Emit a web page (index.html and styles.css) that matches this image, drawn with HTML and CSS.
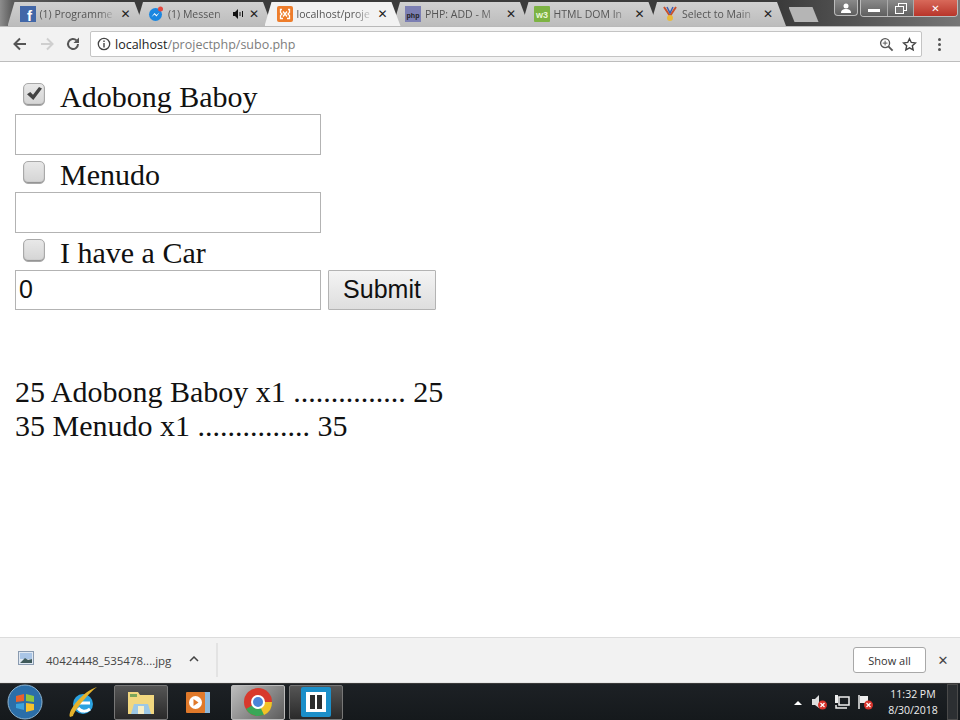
FILE: index.html
```html
<!DOCTYPE html>
<html lang="en">
<head>
<meta charset="utf-8">
<title>subo.php</title>
<link rel="stylesheet" href="styles.css">
</head>
<body>
<div class="screen">
  <header class="tabstrip">
    <div class="tab">
      <svg class="fav" viewBox="0 0 16 16"><rect width="16" height="16" fill="#4267a8"/><text x="7" y="14.500" class="fb">f</text></svg>
      <span class="tab-title">(1) Programme</span><span class="tab-x">✕</span>
    </div>
    <div class="tab">
      <svg class="fav" viewBox="0 0 16 16"><circle cx="7.5" cy="8.5" r="6.5" fill="#1b86e0"/><path d="M3.5 11l3-4 2 2 3-2.500-3 4-2-2z" fill="#fff"/><circle cx="12.500" cy="3" r="2.500" fill="#e5483f"/></svg>
      <span class="tab-title short">(1) Messen</span>
      <svg class="speaker" viewBox="0 0 12 10"><path d="M0 3h2l3-3v10l-3-3H0z" fill="#111"/><path d="M7 3v4M9.500 2v6" stroke="#111" stroke-width="1"/></svg>
      <span class="tab-x">✕</span>
    </div>
    <div class="tab active">
      <svg class="fav" viewBox="0 0 16 16"><rect width="16" height="16" rx="2" fill="#ee7d2b"/><path d="M5 3.500H3.500v3L5 8 3.500 9.500v3H6M11 3.500h1.500v3L11 8l1.500 1.500v3H10M6 5.500l4 5M10 5.500l-4 5" fill="none" stroke="#fff" stroke-width="1.300"/></svg>
      <span class="tab-title">localhost/proje</span><span class="tab-x">✕</span>
    </div>
    <div class="tab">
      <svg class="fav" viewBox="0 0 16 16"><rect width="16" height="16" fill="#7c7fb3"/><text x="8" y="11.500" class="php">php</text></svg>
      <span class="tab-title">PHP: ADD - M</span><span class="tab-x">✕</span>
    </div>
    <div class="tab">
      <svg class="fav" viewBox="0 0 16 16"><rect width="16" height="16" rx="1" fill="#7db343"/><text x="8" y="12" class="w3">w3</text></svg>
      <span class="tab-title">HTML DOM In</span><span class="tab-x">✕</span>
    </div>
    <div class="tab">
      <svg class="fav" viewBox="0 0 16 16"><path d="M2 1l6 9M14 1L8 10" stroke="#c8502c" stroke-width="2"/><path d="M5 1l3 6 3-6" fill="none" stroke="#3d5fb5" stroke-width="1.500"/><circle cx="8" cy="12" r="3" fill="#e9b93a"/></svg>
      <span class="tab-title">Select to Main</span><span class="tab-x">✕</span>
    </div>
    <div class="newtab"></div>
    <div class="winctl">
      <span class="wbtn user"><svg viewBox="0 0 12 10" width="12" height="10"><circle cx="6" cy="3" r="2.500" fill="#fff"/><path d="M1 10c0-3 2-4 5-4s5 1 5 4z" fill="#fff"/></svg></span>
      <span class="wgroup">
        <span class="wbtn min"><i class="min-bar"></i></span>
        <span class="wbtn max"><svg viewBox="0 0 12 11" width="12" height="11"><rect x="3.500" y="0.500" width="8" height="7" fill="none" stroke="#fff"/><rect x="0.500" y="3.500" width="8" height="7" fill="#777" stroke="#fff"/></svg></span>
        <span class="wbtn close">✕</span>
      </span>
    </div>
  </header>

  <nav class="toolbar">
    <svg class="navicon" viewBox="0 0 16 16"><path d="M14 8H3M8 2.500L2.500 8 8 13.500" fill="none" stroke="#555" stroke-width="2"/></svg>
    <svg class="navicon" viewBox="0 0 16 16"><path d="M2 8h11M8 2.500L13.500 8 8 13.500" fill="none" stroke="#cfcfcf" stroke-width="2"/></svg>
    <svg class="navicon" viewBox="0 0 16 16"><path d="M13 8a5 5 0 1 1-1.500-3.600" fill="none" stroke="#555" stroke-width="2"/><path d="M14 1.500v5.500H8.500z" fill="#555"/></svg>
    <div class="omnibox">
      <svg class="info" viewBox="0 0 14 14"><circle cx="7" cy="7" r="5.700" fill="none" stroke="#444" stroke-width="1.300"/><path d="M7 6v4.500M7 3.500v1.500" stroke="#444" stroke-width="1.400"/></svg>
      <span class="url"><b>localhost</b>/projectphp/subo.php</span>
      <svg class="omni-icon" viewBox="0 0 16 16"><circle cx="6.500" cy="6.500" r="4.800" fill="none" stroke="#555" stroke-width="1.400"/><path d="M10 10l4.500 4.500" stroke="#555" stroke-width="2"/><path d="M4 6.500h5M6.500 4v5" stroke="#555"/></svg>
      <svg class="omni-icon" viewBox="0 0 16 16"><path d="M8 1.800l1.900 4 4.400.5-3.300 3 .9 4.400L8 11.500l-3.900 2.200.9-4.400-3.300-3 4.400-.5z" fill="none" stroke="#444" stroke-width="1.500"/></svg>
    </div>
    <div class="kebab"><i></i><i></i><i></i></div>
  </nav>

  <main class="page">
    <form class="order">
      <label class="check-row"><input type="checkbox" checked><span>Adobong Baboy</span></label>
      <input class="field" type="text">
      <label class="check-row"><input type="checkbox"><span>Menudo</span></label>
      <input class="field" type="text">
      <label class="check-row"><input type="checkbox"><span>I have a Car</span></label>
      <div class="submit-row">
        <input class="field" type="text" value="0">
        <button class="submit" type="button">Submit</button>
      </div>
    </form>
    <div class="receipt">
      <div>25 Adobong Baboy x1 ............... 25</div>
      <div>35 Menudo x1 ............... 35</div>
    </div>
  </main>

  <footer class="downloads">
    <svg class="dl-file" viewBox="0 0 16 14"><rect x="0.500" y="0.500" width="15" height="13" fill="#dfe8f2" stroke="#8a9bb0"/><rect x="2" y="2" width="12" height="6" fill="#a9c5e6"/><path d="M2 12l5-5 3 2 4-1v4z" fill="#3f5a5a"/></svg>
    <span class="dl-name">40424448_535478....jpg</span>
    <svg class="dl-caret" viewBox="0 0 10 6"><path d="M1 5l4-4 4 4" fill="none" stroke="#444" stroke-width="1.500"/></svg>
    <span class="dl-sep"></span>
    <button class="showall" type="button">Show all</button>
    <span class="dl-x">✕</span>
  </footer>

  <div class="taskbar">
    <svg class="orb" viewBox="0 0 36 36"><circle cx="18" cy="18" r="17" fill="#2b6ea8" stroke="#8fb4cf"/><path d="M9 12l8-2v7l-8 1z" fill="#e8622c"/><path d="M19 10l8 2v6l-8-1z" fill="#8cc63f"/><path d="M9 20l8-1v7l-8-2z" fill="#3ba3dc"/><path d="M19 19l8 1v6l-8 2z" fill="#f6c22b"/></svg>
    <svg class="ie" viewBox="0 0 32 34"><ellipse cx="16" cy="19" rx="10" ry="10" fill="#2ba2e0"/><path d="M10 18h13M11 23c3 4 8 4 12 1" fill="none" stroke="#fff" stroke-width="3"/><path d="M3 32C0 26 16 6 30 2 24 6 8 24 6 31z" fill="#e6b32c"/></svg>
    <span class="task-btn"><svg viewBox="0 0 28 26" width="28" height="26"><path d="M1 3h10l2 3h14v19H1z" fill="#f1d77f"/><rect x="3" y="5" width="7" height="3" fill="#7aa55a"/><path d="M7 15h14l3 10H4z" fill="#9cc8e6"/><rect x="11" y="17" width="6" height="8" fill="#f7efc8"/></svg></span>
    <span class="task-plain"><svg viewBox="0 0 26 26" width="26" height="26"><rect x="5" y="3" width="20" height="21" fill="#8db8dc"/><rect x="1" y="3" width="19" height="21" rx="1" fill="#e0792a"/><circle cx="10.500" cy="13.500" r="6.500" fill="#fff"/><path d="M8.500 10l5 3.500-5 3.500z" fill="#e0792a"/></svg></span>
    <span class="task-btn lit"><svg viewBox="0 0 30 30" width="30" height="30"><circle cx="15" cy="15" r="14" fill="#d8392c"/><path d="M15 15L3 22a14 14 0 0 0 12 7z" fill="#3aa757"/><path d="M15 15h14a14 14 0 0 1-14 14z" fill="#3aa757"/><path d="M15 15l14 0a14 14 0 0 1-8 13z" fill="#f3c228"/><circle cx="15" cy="15" r="7" fill="#fff"/><circle cx="15" cy="15" r="5" fill="#4b84d8"/></svg></span>
    <span class="task-btn second"><svg viewBox="0 0 30 30" width="30" height="30"><rect width="30" height="30" rx="2" fill="#1b8fc9"/><rect x="5" y="5" width="20" height="20" fill="#fff"/><rect x="9" y="8" width="5" height="14" fill="#2d2d2d"/><rect x="16" y="8" width="5" height="14" fill="#2d2d2d"/></svg></span>
    <div class="tray">
      <svg class="tray-arrow" viewBox="0 0 8 5"><path d="M0 5l4-4 4 4z" fill="#fff"/></svg>
      <svg class="tray-ico" viewBox="0 0 16 16"><path d="M1 5h3l4-4v13l-4-3H1z" fill="#ddd"/><circle cx="11.500" cy="11" r="4.500" fill="#d8342c"/><path d="M9.500 9l4 4M13.500 9l-4 4" stroke="#fff" stroke-width="1.200"/></svg>
      <svg class="tray-ico" viewBox="0 0 16 16"><rect x="5" y="3" width="10" height="8" fill="none" stroke="#eee" stroke-width="1.500"/><rect x="1" y="1" width="3" height="8" fill="#eee"/><path d="M2 11v3h11" fill="none" stroke="#eee" stroke-width="1.500"/></svg>
      <svg class="tray-ico" viewBox="0 0 16 16"><path d="M2 1v14" stroke="#eee" stroke-width="1.500"/><path d="M3 2h8v7H3z" fill="#eee"/><circle cx="11.500" cy="11" r="4.500" fill="#d8342c"/><path d="M9.500 9l4 4M13.500 9l-4 4" stroke="#fff" stroke-width="1.200"/></svg>
      <div class="clock"><div>11:32 PM</div><div>8/30/2018</div></div>
      <span class="show-desktop"></span>
    </div>
  </div>
</div>
</body>
</html>
```
FILE: styles.css
```css
* { box-sizing: border-box; }
html, body { margin: 0; height: 100%; }
body { overflow: hidden; background: #fff; }
.screen { width: 960px; height: 720px; display: flex; flex-direction: column; font-family: "Open Sans", "Noto Sans", sans-serif; }

/* tab strip */
.tabstrip { height: 27px; flex: none; display: flex; align-items: flex-end; padding-left: 7.500px; background: linear-gradient(90deg, #8d8d8d 0, #5c5c5c 12px, #3b3b3b 120px, #3b3b3b 780px, #4c4c4c 830px, #777 960px); border-bottom: 1px solid #b9b9b9; }
.tab { width: 136px; height: 24px; margin-right: -7.500px; padding: 0 12px 0 12px; display: flex; align-items: center; background: linear-gradient(#d0d0d0, #bcbcbc); clip-path: polygon(0 100%, 7px 0, 127px 0, 100% 100%); flex: none; }
.tab.active { background: #f2f2f2; position: relative; z-index: 1; }
.fav { width: 16px; height: 16px; flex: none; }
.fb { font: bold 15px "Liberation Sans", sans-serif; fill: #fff; }
.php { font: bold 7px "Liberation Sans", sans-serif; fill: #222; text-anchor: middle; }
.w3 { font: bold 9px "Liberation Sans", sans-serif; fill: #e9f5d8; text-anchor: middle; }
.tab-title { flex: 1; min-width: 0; margin-left: 4px; font-size: 10.500px; line-height: 14px; color: #555; white-space: nowrap; overflow: hidden; -webkit-mask-image: linear-gradient(90deg, #000 75%, transparent 100%); mask-image: linear-gradient(90deg, #000 75%, transparent 100%); }
.tab-x { flex: none; margin-left: 3px; width: 12px; font: bold 12px "DejaVu Sans", sans-serif; color: #222; text-align: center; }
.speaker { width: 12px; height: 10px; flex: none; margin-left: 2px; }
.newtab { width: 30px; height: 15px; margin: 0 0 4px 10px; flex: none; background: #b5b5b5; clip-path: polygon(0 0, 24px 0, 100% 100%, 6px 100%); }
.winctl { margin-left: auto; margin-right: 2px; align-self: flex-start; display: flex; gap: 2px; }
.wgroup { display: flex; border: 1px solid #bbb; border-top: 0; border-radius: 0 0 4px 4px; overflow: hidden; }
.wbtn { height: 16px; display: flex; align-items: center; justify-content: center; background: linear-gradient(#8a8a8a, #5f5f5f); color: #fff; }
.user { width: 24px; border: 1px solid #bbb; border-top: 0; border-radius: 0 0 4px 4px; }
.min { width: 27px; border-right: 1px solid #aaa; }
.max { width: 26px; border-right: 1px solid #aaa; }
.close { width: 43px; background: linear-gradient(#d8695a, #b8352a); font: bold 10px "DejaVu Sans", sans-serif; }
.min-bar { width: 12px; height: 3px; margin-top: 4px; background: #fff; }

/* toolbar */
.toolbar { height: 35px; flex: none; display: flex; align-items: center; padding: 0 14px 0 12px; background: #f2f2f2; border-bottom: 1px solid #bdbdbd; }
.navicon { width: 16px; height: 16px; margin-right: 10.500px; flex: none; }
.omnibox { width: 832px; height: 26px; margin-left: -1.500px; padding: 0 3px 0 6px; display: flex; align-items: center; gap: 4px; background: #fff; border: 1px solid #c4c4c4; border-radius: 2px; }
.info { width: 14px; height: 14px; flex: none; }
.url { flex: 1; font-size: 12.500px; color: #7d7d7d; }
.url b { font-weight: 400; color: #222; }
.omni-icon { width: 15px; height: 15px; margin-left: 3px; margin-right: 1px; flex: none; }
.kebab { margin-left: 16px; display: flex; flex-direction: column; gap: 2px; }
.kebab i { width: 3px; height: 3px; border-radius: 50%; background: #555; }

/* page */
.page { flex: 1; min-height: 0; padding: 15px 15px 0; background: #fff; font: 30px/34px "Liberation Serif", "Times New Roman", serif; color: #111; }
.order { display: flex; flex-direction: column; align-items: flex-start; }
.check-row { height: 37px; display: flex; align-items: flex-start; gap: 15px; padding-left: 8px; }
.check-row span { line-height: 34px; margin-top: 3px; }
.check-row input { appearance: none; -webkit-appearance: none; position: relative; width: 22px; height: 23px; margin: 6px 0 0; border: 1px solid #a9a9a9; border-radius: 5px; background: linear-gradient(#e8e8e8, #d4d4d4); box-shadow: inset 0 -1px 1px #8e8e8e; }
.check-row input:checked::after { content: ""; position: absolute; left: 3px; top: 3px; width: 15px; height: 13px; background: #444; clip-path: polygon(0 55%, 22% 38%, 40% 60%, 80% 0, 100% 12%, 42% 100%); }
.field { display: block; width: 306px; height: 41px; padding: 0 3px; border: 1px solid #b3b3b3; background: #fff; font: 25px "Liberation Sans", Arial, sans-serif; color: #111; outline: none; }
.submit-row { display: flex; align-items: flex-start; gap: 7px; }
.submit-row .field { height: 40px; padding-bottom: 2px; }
.submit { width: 108px; height: 40px; padding: 0 0 2px; border: 1px solid #b3b3b3; border-radius: 1px; background: linear-gradient(#f4f4f4, #dedede); font: 25px "Liberation Sans", Arial, sans-serif; color: #111; }
.receipt { margin-top: 65px; }

/* downloads */
.downloads { height: 46px; flex: none; display: flex; align-items: center; padding: 0 11px 0 18px; background: #f2f2f2; border-top: 1px solid #dcdcdc; border-bottom: 1px solid #e6e6e6; }
.dl-file { width: 16px; height: 14px; flex: none; margin-top: -4px; }
.dl-name { margin-left: 12px; font-size: 11.500px; color: #444; white-space: nowrap; width: 126px; }
.dl-caret { width: 10px; height: 6px; margin-left: 17px; flex: none; margin-top: -3px; }
.dl-sep { width: 2px; height: 34px; margin-left: 17px; background: #e3e3e3; }
.showall { margin-left: auto; width: 73px; height: 26px; padding: 0; background: #fff; border: 1px solid #a8a8a8; border-radius: 3px; font: 11px "Open Sans", sans-serif; color: #333; }
.dl-x { margin-left: 11px; width: 12px; font: bold 13px "DejaVu Sans", sans-serif; color: #444; text-align: center; }

/* taskbar */
.taskbar { height: 37px; flex: none; display: flex; align-items: center; padding-left: 7px; background: linear-gradient(#1d2125, #15191c); border-top: 1px solid #3a3a3a; color: #eee; }
.orb { width: 36px; height: 36px; flex: none; }
.ie { width: 32px; height: 34px; flex: none; margin-left: 24px; }
.task-btn { width: 54px; height: 35px; flex: none; display: flex; align-items: center; justify-content: center; background: linear-gradient(#555, #2a2a2a); border: 1px solid #777; border-radius: 2px; margin-left: 15px; }
.task-plain { width: 26px; height: 35px; flex: none; display: flex; align-items: center; margin-left: 17px; }
.task-btn.lit { margin-left: 20px; background: linear-gradient(135deg, #bdbdbd, #5c5c5c); border-color: #bbb; }
.task-btn.second { margin-left: 4px; }
.tray { margin-left: auto; display: flex; align-items: center; }
.tray-arrow { width: 8px; height: 5px; flex: none; margin-right: 9px; }
.tray-ico { width: 16px; height: 16px; margin-right: 7px; flex: none; }
.clock { margin-left: 6px; width: 54px; font-size: 10.500px; line-height: 16px; text-align: center; color: #eee; }
.show-desktop { width: 11px; height: 36px; margin: 0 2px 0 7px; background: #2c2f32; border: 1px solid #4a4a4a; }
```
